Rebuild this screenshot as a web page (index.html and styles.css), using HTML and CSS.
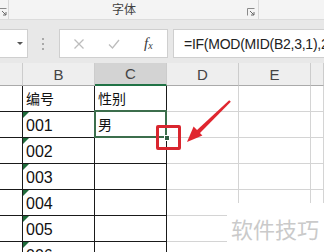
FILE: index.html
```html
<!DOCTYPE html>
<html lang="zh">
<head>
    <meta charset="UTF-8">
    <title>性别公式</title>
    <link rel="stylesheet" href="styles.css">
</head>
<body>
    <div class="ribbon">
        <div class="group g-prev">
            <svg class="launcher" width="8" height="8" viewBox="0 0 8 8"><path d="M0.5 7.5V0.5H7.5" fill="none" stroke="#8a8a8a"/><path d="M3 3L7 7M4 7H7V4" fill="none" stroke="#6a6a6a"/></svg>
        </div>
        <div class="group g-font">
            <span class="group-label">字体</span>
            <svg class="launcher" width="8" height="8" viewBox="0 0 8 8"><path d="M0.5 7.5V0.5H7.5" fill="none" stroke="#8a8a8a"/><path d="M3 3L7 7M4 7H7V4" fill="none" stroke="#6a6a6a"/></svg>
        </div>
    </div>

    <div class="fbar">
        <div class="namebox"><span class="dd"></span></div>
        <div class="grip"><i></i><i></i><i></i></div>
        <div class="fbtns">
            <svg class="fbtn" width="12" height="12" viewBox="0 0 12 12"><path d="M1.5 1.5L10.5 10.5M10.5 1.5L1.5 10.5" stroke="#bdbdbd" stroke-width="1.3"/></svg>
            <svg class="fbtn" width="12" height="12" viewBox="0 0 12 12"><path d="M1 6.5L4.5 10L11 2" fill="none" stroke="#bdbdbd" stroke-width="1.3"/></svg>
            <span class="fx">f<sub>x</sub></span>
        </div>
        <div class="finput">=IF(MOD(MID(B2,3,1),2)=1,"男","女")</div>
    </div>

    <div class="sheet">
        <div class="h"></div>
        <div class="h">B</div>
        <div class="h active">C</div>
        <div class="h">D</div>
        <div class="h">E</div>
        <div class="h"></div>

        <div class="c k"></div>
        <div class="c k cjk">编号</div>
        <div class="c k cjk">性别</div>
        <div class="c g"></div>
        <div class="c g"></div>
        <div class="c g"></div>

        <div class="c k"></div>
        <div class="c k num">001</div>
        <div class="c k cjk sel">男<span class="handle"></span></div>
        <div class="c g"></div>
        <div class="c g"></div>
        <div class="c g"></div>

        <div class="c k"></div>
        <div class="c k num">002</div>
        <div class="c k"></div>
        <div class="c g"></div>
        <div class="c g"></div>
        <div class="c g"></div>

        <div class="c k"></div>
        <div class="c k num">003</div>
        <div class="c k"></div>
        <div class="c g"></div>
        <div class="c g"></div>
        <div class="c g"></div>

        <div class="c k"></div>
        <div class="c k num">004</div>
        <div class="c k"></div>
        <div class="c g"></div>
        <div class="c g"></div>
        <div class="c g"></div>

        <div class="c k"></div>
        <div class="c k num">005</div>
        <div class="c k"></div>
        <div class="c g"></div>
        <div class="c g"></div>
        <div class="c g"></div>

        <div class="c k"></div>
        <div class="c k num">006</div>
        <div class="c k"></div>
        <div class="c g"></div>
        <div class="c g"></div>
        <div class="c g"></div>
    </div>

    <!-- red callout pointing at the fill handle -->
    <div class="callout-box"></div>
    <svg class="callout-arrow" width="324" height="252" viewBox="0 0 324 252">
        <polygon points="229.2,100.2 230.8,101.8 199.5,133.5 196.5,130.5" fill="#e0262f"/>
        <polygon points="187,142 193.6,126.4 202.4,135.6" fill="#e0262f"/>
    </svg>

    <div class="watermark">软件技巧</div>
</body>
</html>
```

FILE: styles.css
```css
* {
    box-sizing: border-box;
}

body {
    margin: 0;
    width: 324px;
    height: 252px;
    overflow: hidden;
    position: relative;
    background-color: #ffffff;
    font-family: "Liberation Sans", "Noto Sans CJK SC", sans-serif;
}

/* ribbon strip */

.ribbon {
    display: flex;
    height: 20px;
    background-color: #f4f4f4;
    border-bottom: 1px solid #dcdcdc;
}

.group {
    display: flex;
    align-items: flex-end;
    height: 19px;
    border-right: 1px solid #d8d8d8;
}

.g-prev {
    width: 9px;
    padding: 0 0 3px 0;
}

.g-prev .launcher {
    margin-left: -1px;
}

.g-font {
    width: 250px;
    padding: 0 3px 3px 103px;
}

.group-label {
    font-family: "Noto Sans CJK SC", sans-serif;
    font-size: 12px;
    line-height: 15px;
    color: #404040;
    align-self: center;
    margin-top: 1px;
}

.g-font .launcher {
    margin-left: auto;
}

/* formula bar */

.fbar {
    display: flex;
    height: 43px;
    padding: 9px 0 5px 0;
    background-color: #e8e8e8;
}

.namebox {
    display: flex;
    align-items: center;
    width: 28px;
    height: 29px;
    background-color: #ffffff;
    border: 1px solid #cfcfcf;
    border-left: none;
    padding-left: 17px;
}

.dd {
    width: 0;
    height: 0;
    border-left: 3px solid transparent;
    border-right: 3px solid transparent;
    border-top: 3px solid #555555;
}

.grip {
    display: flex;
    flex-direction: column;
    justify-content: center;
    gap: 3px;
    width: 31px;
    padding-left: 14px;
}

.grip i {
    display: block;
    width: 2px;
    height: 2px;
    background-color: #a9a9a9;
}

.fbtns {
    display: flex;
    align-items: center;
    width: 109px;
    height: 29px;
    background-color: #ffffff;
    border: 1px solid #cfcfcf;
    padding-left: 13px;
}

.fbtn {
    margin-right: 23px;
}

.fx {
    font-family: "Liberation Serif", serif;
    font-style: italic;
    font-size: 15px;
    color: #3a3a3a;
    margin-left: 1px;
}

.fx sub {
    font-size: 10px;
    vertical-align: -1px;
}

.finput {
    flex: 1;
    height: 29px;
    margin-left: 5px;
    background-color: #ffffff;
    border: 1px solid #cfcfcf;
    border-right: none;
    padding: 4px 0 0 10px;
    font-family: "Liberation Sans", "Noto Sans CJK SC", sans-serif;
    font-size: 14px;
    letter-spacing: -0.25px;
    line-height: 20px;
    color: #222222;
    white-space: nowrap;
    overflow: hidden;
}

/* sheet grid */

.sheet {
    display: grid;
    grid-template-columns: 23px 72px 72px 72px 72px 13px;
    grid-template-rows: 23px;
    grid-auto-rows: 26px;
}

.h {
    display: flex;
    align-items: center;
    justify-content: center;
    background-color: #eeeeee;
    border-right: 1px solid #cccccc;
    border-bottom: 1px solid #aaaaaa;
    font-size: 15px;
    color: #444444;
}

.h.active {
    background-color: #d3d3d3;
    border-bottom: 2px solid #217346;
}

.c {
    display: flex;
    align-items: flex-end;
    position: relative;
    padding: 0 0 2px 3px;
    font-family: "Liberation Sans Narrow", "Liberation Sans", "Noto Sans CJK SC", sans-serif;
    font-size: 16px;
    line-height: 19px;
    color: #111111;
}

.c.cjk {
    font-family: "Noto Sans CJK SC", sans-serif;
    font-size: 14px;
    padding-bottom: 3px;
}

.c.k {
    border-right: 1px solid #1a1a1a;
    border-bottom: 1px solid #1a1a1a;
}

.c.g {
    border-right: 1px solid #d4d4d4;
    border-bottom: 1px solid #d4d4d4;
}

.c.num::before {
    content: "";
    position: absolute;
    top: 0;
    left: 0;
    border-top: 6px solid #1f6b3a;
    border-right: 6px solid transparent;
}

.c.sel::after {
    content: "";
    position: absolute;
    top: -2px;
    left: -1px;
    right: -1px;
    bottom: -1px;
    border: 2px solid #3c6e4c;
}

.handle {
    position: absolute;
    right: -4px;
    bottom: -4px;
    width: 6px;
    height: 6px;
    background-color: #2e5f42;
    border: 1px solid #ffffff;
    z-index: 2;
}

/* overlays */

.callout-box {
    position: absolute;
    left: 156px;
    top: 125px;
    width: 25px;
    height: 25px;
    border: 3px solid #d9262f;
    border-radius: 2px;
}

.callout-arrow {
    position: absolute;
    left: 0;
    top: 0;
    pointer-events: none;
}

.watermark {
    position: absolute;
    left: 227px;
    top: 203px;
    width: 97px;
    height: 49px;
    padding: 12px 0 0 4px;
    background-color: #ffffff;
    font-family: "Noto Sans CJK SC", sans-serif;
    font-size: 22px;
    line-height: 26px;
    color: #cacaca;
    white-space: nowrap;
}
```
